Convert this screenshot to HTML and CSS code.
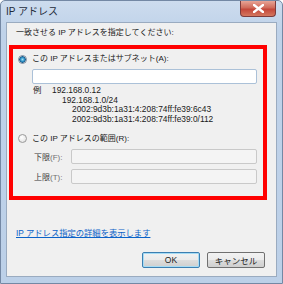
FILE: index.html
```html
<!DOCTYPE html>
<html lang="ja">
<head>
    <meta charset="UTF-8">
    <title>IP アドレス</title>
    <link rel="stylesheet" href="styles.css">
</head>
<body>

    <div class="window">
        <!-- Title bar -->
        <div class="titlebar">
            <span class="title">IP アドレス</span>
            <div class="close-btn">
                <svg width="11" height="9" viewBox="0 0 11 9">
                    <path d="M1 1 L10 8 M10 1 L1 8" stroke="#ffffff" stroke-width="2.4" stroke-linecap="square"/>
                </svg>
            </div>
        </div>

        <!-- Client area -->
        <div class="client">
            <div class="prompt">一致させる IP アドレスを指定してください:</div>

            <div class="highlight">
                <div class="option-row">
                    <span class="radio checked"></span>
                    <span>この IP アドレスまたはサブネット(A):</span>
                </div>
                <div class="text-box subnet-box"></div>

                <div class="examples">
                    <div><span class="ex-label">例</span>192.168.0.12</div>
                    <div class="ex-2">192.168.1.0/24</div>
                    <div class="ex-3">2002:9d3b:1a31:4:208:74ff:fe39:6c43</div>
                    <div class="ex-3">2002:9d3b:1a31:4:208:74ff:fe39:0/112</div>
                </div>

                <div class="option-row second">
                    <span class="radio"></span>
                    <span>この IP アドレスの範囲(R):</span>
                </div>
                <div class="range-row">
                    <span class="range-label">下限<span class="key">(F):</span></span>
                    <div class="text-box disabled"></div>
                </div>
                <div class="range-row">
                    <span class="range-label">上限<span class="key">(T):</span></span>
                    <div class="text-box disabled"></div>
                </div>
            </div>

            <a class="details-link" href="#">IP アドレス指定の詳細を表示します</a>

            <div class="buttons">
                <button class="btn default">OK</button>
                <button class="btn">キャンセル</button>
            </div>
        </div>
    </div>

</body>
</html>
```

FILE: styles.css
```css
body {
    margin: 0;
    background-color: #ffffff;
    font-family: "Liberation Sans", "Noto Sans CJK JP", sans-serif;
    font-size: 8px;
    color: #1a1a1a;
}
.window {
    width: 283px;
    height: 284px;
    box-sizing: border-box;
    display: flex;
    flex-direction: column;
    border: 1px solid #7488a4;
    border-radius: 5px 5px 0 0;
    background: linear-gradient(#cddcee, #bfd2e9 30px, #bcd0e8);
    padding: 0 5px 6px 5px;
}
.titlebar {
    height: 21px;
    display: flex;
    justify-content: space-between;
    align-items: flex-start;
}
.title {
    font-size: 10px;
    line-height: 12px;
    margin: 5px 0 0 0;
    color: #1e2a3a;
}
.close-btn {
    width: 36px;
    height: 16px;
    margin-right: 1px;
    box-sizing: border-box;
    border: 1px solid #7d3b3b;
    border-top: none;
    border-radius: 0 0 4px 4px;
    background: linear-gradient(#e8a496, #d06b5a 45%, #c4473a 55%, #d4775f);
    display: flex;
    align-items: center;
    justify-content: center;
}
.client {
    flex: 1;
    background-color: #f0f0f0;
    border: 1px solid #9aabc0;
    padding: 4px 11px 0 9px;
    display: flex;
    flex-direction: column;
}
.prompt {
    line-height: 12px;
}
.highlight {
    margin: 6px 0 0 -7px;
    width: 258px;
    box-sizing: border-box;
    border: 4px solid #ff0000;
    padding: 4px 6px 12px 5px;
}
.option-row {
    display: flex;
    align-items: center;
    gap: 5px;
    line-height: 12px;
}
.option-row.second {
    margin-top: 8px;
}
.radio {
    width: 9px;
    height: 9px;
    box-sizing: border-box;
    border-radius: 50%;
    border: 1px solid #9a9a9a;
    background: radial-gradient(circle at 40% 35%, #ffffff, #dcdcdc);
}
.radio.checked {
    border-color: #7a8a9e;
    background: radial-gradient(circle, #9fe0f5 0, #2d8fc4 2px, #1d5f8e 3px, #f4f4f4 3.6px);
}
.text-box {
    height: 15px;
    box-sizing: border-box;
    border: 1px solid #abc1d8;
    border-radius: 2px;
    background-color: #ffffff;
}
.subnet-box {
    margin: 4px 0 0 14px;
}
.text-box.disabled {
    flex: 1;
    border-color: #c9c9c9;
    background-color: #f4f4f4;
}
.examples {
    margin: 2px 0 0 15px;
    font-size: 8.4px;
    line-height: 9.7px;
}
.ex-label {
    display: inline-block;
    width: 19px;
}
.ex-2 {
    padding-left: 29px;
}
.ex-3 {
    padding-left: 39px;
}
.range-row {
    display: flex;
    align-items: center;
    margin: 4px 0 0 16px;
}
.range-row + .range-row {
    margin-top: 5px;
}
.range-label {
    width: 37px;
    color: #3a3a3a;
}
.key {
    color: #707070;
}
.details-link {
    margin-top: 27px;
    line-height: 12px;
    font-size: 8.3px;
    color: #0a62c8;
    text-decoration: underline;
    align-self: flex-start;
}
.buttons {
    display: flex;
    justify-content: flex-end;
    gap: 7px;
    margin-top: 13px;
}
.btn {
    width: 58px;
    height: 16px;
    padding: 0;
    font-family: inherit;
    font-size: 8.5px;
    color: #1a1a1a;
    border: 1px solid #707070;
    border-radius: 2px;
    background: linear-gradient(#f2f2f2, #ebebeb 50%, #dddddd 51%, #cfcfcf);
}
.btn.default {
    border-color: #3c7fb1;
    box-shadow: inset 0 0 0 1px #a6dcf5;
}
```
